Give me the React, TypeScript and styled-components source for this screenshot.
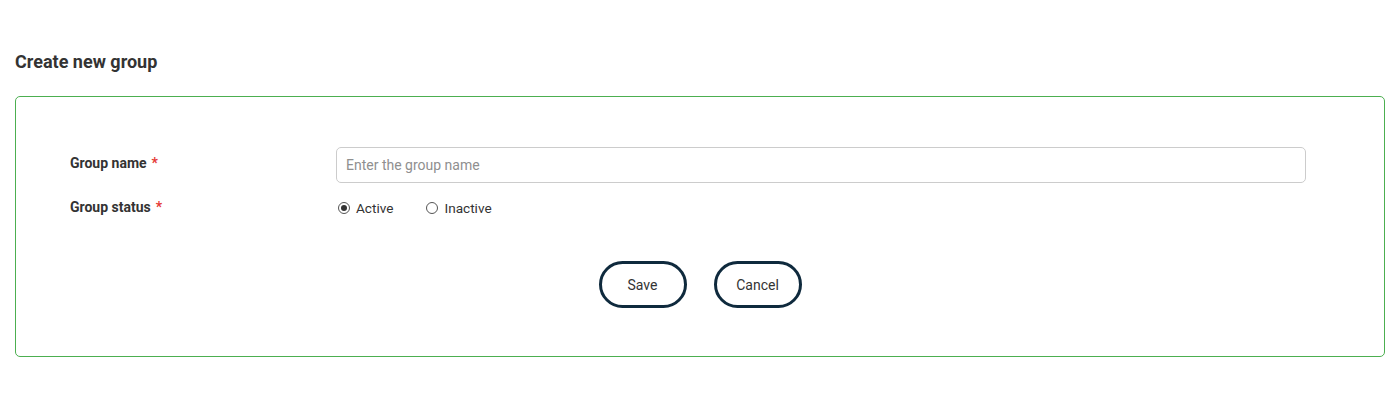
import { createGlobalStyle, styled } from "styled-components";

const GlobalStyle = createGlobalStyle`
  body {
    margin: 0;
    background: #ffffff;
    font-family: Roboto, "Liberation Sans", Arial, sans-serif;
    color: #333333;
  }
`;

const Page = styled.div`
  padding: 51px 15px 0 15px;
`;

const Title = styled.h2`
  margin: 0 0 23px 0;
  font-size: 18px;
  line-height: 22px;
  font-weight: 700;
  color: #333333;
`;

const Card = styled.div`
  border: 1px solid #4caf50;
  border-radius: 5px;
  padding: 50px 78px 48px 54px;
`;

const FormRow = styled.div<{ $gap?: number }>`
  display: grid;
  grid-template-columns: 266px 1fr;
  align-items: start;
  margin-bottom: ${(p) => p.$gap ?? 0}px;
`;

const Label = styled.label<{ $top: number }>`
  font-size: 14px;
  line-height: 16px;
  font-weight: 700;
  color: #333333;
  padding-top: ${(p) => p.$top}px;
`;

const Required = styled.span`
  color: #e53935;
  margin-left: 5px;
`;

const TextInput = styled.input`
  box-sizing: border-box;
  width: 100%;
  height: 36px;
  border: 1px solid #cccccc;
  border-radius: 5px;
  padding: 0 9px;
  font-family: inherit;
  font-size: 14px;
  color: #333333;
  outline: none;

  &::placeholder {
    color: #8f8f8f;
  }
`;

const RadioGroup = styled.div`
  display: flex;
  align-items: center;
  gap: 33px;
  height: 26px;
  padding-left: 2px;
`;

const RadioOption = styled.label`
  display: flex;
  align-items: center;
  gap: 6px;
  font-size: 13.6px;
  color: #333333;
  cursor: pointer;
`;

const RadioCircle = styled.span<{ $checked: boolean }>`
  box-sizing: border-box;
  width: 12px;
  height: 12px;
  border-radius: 50%;
  border: 1px solid #555555;
  display: flex;
  align-items: center;
  justify-content: center;

  &::after {
    content: "";
    width: 6px;
    height: 6px;
    border-radius: 50%;
    background: ${(p) => (p.$checked ? "#333333" : "transparent")};
  }
`;

const Actions = styled.div`
  display: flex;
  justify-content: center;
  gap: 27px;
  margin-top: 40px;
  padding-left: 24px;
`;

const Button = styled.button`
  box-sizing: border-box;
  width: 88px;
  height: 47px;
  border: 3px solid #0f2a3d;
  border-radius: 24px;
  background: #ffffff;
  font-family: inherit;
  font-size: 14px;
  color: #333333;
  cursor: pointer;
`;

export default function App() {
  return (
    <Page>
      <GlobalStyle />
      <Title>Create new group</Title>
      <Card>
        <FormRow $gap={12}>
          <Label $top={8}>
            Group name<Required>*</Required>
          </Label>
          <TextInput placeholder="Enter the group name" />
        </FormRow>
        <FormRow>
          <Label $top={4}>
            Group status<Required>*</Required>
          </Label>
          <RadioGroup>
            <RadioOption>
              <RadioCircle $checked={true} />
              Active
            </RadioOption>
            <RadioOption>
              <RadioCircle $checked={false} />
              Inactive
            </RadioOption>
          </RadioGroup>
        </FormRow>
        <Actions>
          <Button>Save</Button>
          <Button>Cancel</Button>
        </Actions>
      </Card>
    </Page>
  );
}
